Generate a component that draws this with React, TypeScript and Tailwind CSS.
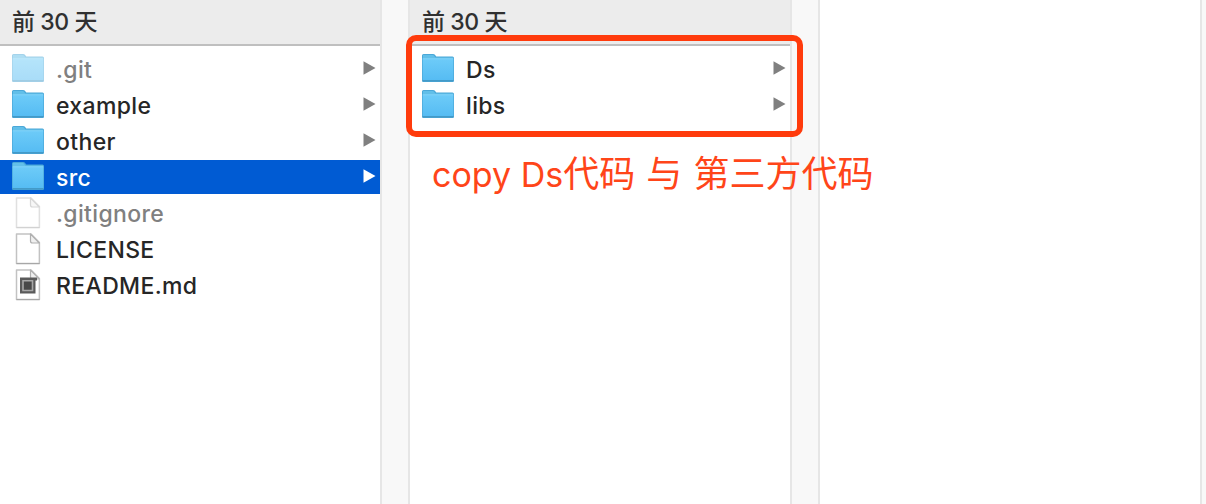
import React from "react";

type Kind = "folder" | "file" | "markdown";
type Entry = { name: string; kind: Kind; dim?: boolean; selected?: boolean };

const first: Entry[] = [
  { name: ".git", kind: "folder", dim: true },
  { name: "example", kind: "folder" },
  { name: "other", kind: "folder" },
  { name: "src", kind: "folder", selected: true },
  { name: ".gitignore", kind: "file", dim: true },
  { name: "LICENSE", kind: "file" },
  { name: "README.md", kind: "markdown" },
];

const second: Entry[] = [
  { name: "Ds", kind: "folder" },
  { name: "libs", kind: "folder" },
];

function FolderIcon() {
  return (
    <svg width="32" height="28" viewBox="0 0 32 28" className="block">
      <defs>
        <linearGradient id="folder" x1="0" y1="0" x2="0" y2="1">
          <stop offset="0" stopColor="#6dcbf8" />
          <stop offset="1" stopColor="#56bcf3" />
        </linearGradient>
      </defs>
      <path d="M0 1.5Q0 0 1.5 0H11Q12.5 0 13.3 1.2L14.3 2.5H30.5Q32 2.5 32 4V26.5Q32 28 30.5 28H1.5Q0 28 0 26.5Z" fill="#4ba8d8" />
      <path d="M1 1H11.2L13.5 3.5H31V5H1Z" fill="#62bfe9" />
      <path d="M.7 5H31.3V26H.7Z" fill="url(#folder)" />
      <path d="M.7 4.8H31.3" stroke="#83d4fa" strokeWidth="1" />
      <path d="M.5 26.8H31.5" stroke="#4296c5" strokeWidth="1.2" />
    </svg>
  );
}

function FileIcon({ markdown }: { markdown?: boolean }) {
  return (
    <svg width="32" height="32" viewBox="0 0 32 32" className="block">
      <path d="M4.5 1H19L27.4 9.5V30.5H4.5Z" fill="#fff" stroke="#c2c2c2" strokeWidth="1.5" strokeLinejoin="round" />
      <path d="M4.5 30.6H27.6" stroke="#a5a5a5" strokeWidth="1" />
      <path d="M18.5 1V8Q18.5 10 20.5 10H27.3Z" fill="#f0f0f0" stroke="#b0b0b0" strokeWidth="1.2" strokeLinejoin="round" />
      {markdown && (
        <g>
          <path d="M8 8.5H25V11.5H23.5V24.5H8Z" fill="#5a5a5a" />
          <path d="M11 11.8H20.5V21.5H11Z" fill="#484848" stroke="#a8a8a8" strokeWidth="1.6" />
        </g>
      )}
    </svg>
  );
}

function Row({ entry }: { entry: Entry }) {
  const folder = entry.kind === "folder";
  return (
    <li className="h-9">
      <div className={`flex h-[34px] items-center pl-3 pr-1 ${entry.selected ? "bg-[#005bd3] text-white" : entry.dim ? "text-[#808080]" : "text-[#262626]"}`}>
        <span className={`w-8 shrink-0 ${entry.dim ? "opacity-50" : ""} ${folder ? "-mt-0.5" : "-mt-px"}`}>
          {folder ? <FolderIcon /> : <FileIcon markdown={entry.kind === "markdown"} />}
        </span>
        <span className="ml-3 flex-1 pt-0.5 font-[450] leading-8 tracking-[0.35px]">{entry.name}</span>
        {folder && (
          <svg width="13" height="14" viewBox="0 0 13 14" className={`mb-0.5 block ${entry.selected ? "fill-white" : "fill-[#808080]"}`}>
            <path d="M.5 .3L12.5 7L.5 13.7Z" />
          </svg>
        )}
      </div>
    </li>
  );
}

function Column({ entries }: { entries: Entry[] }) {
  return (
    <section className="w-[380px] shrink-0 bg-white">
      <header className="h-[46px] border-b-2 border-[#bfbfbf] bg-[#ececec] pl-3 font-medium leading-[45px] tracking-[-0.4px] text-[#303030]">
        前 30 天
      </header>
      <ul className="pt-1.5">
        {entries.map((e) => (
          <Row key={e.name} entry={e} />
        ))}
      </ul>
    </section>
  );
}

function Gutter() {
  return <div className="w-[30px] shrink-0 border-x-2 border-[#e6e6e6] bg-[#f8f8f8]" />;
}

export default function App() {
  return (
    <main className="relative flex h-[504px] w-[1206px] overflow-hidden bg-white font-['Inter','Noto_Sans_CJK_SC',sans-serif] text-[23px]">
      <Column entries={first} />
      <Gutter />
      <Column entries={second} />
      <Gutter />
      <section className="w-[380px] shrink-0 bg-white" />
      <Gutter />
      <div className="absolute left-[406px] top-[35px] h-[102px] w-[397px] rounded-[10px] border-[6px] border-[#ff3b0c]" />
      <p className="absolute left-[432px] top-[152px] whitespace-nowrap text-[36px] leading-[44px] text-[#ff4519]">
        <span className="text-[34px]">copy Ds</span>
        <span className="[word-spacing:1px]">代码 与 第三方代码</span>
      </p>
    </main>
  );
}
